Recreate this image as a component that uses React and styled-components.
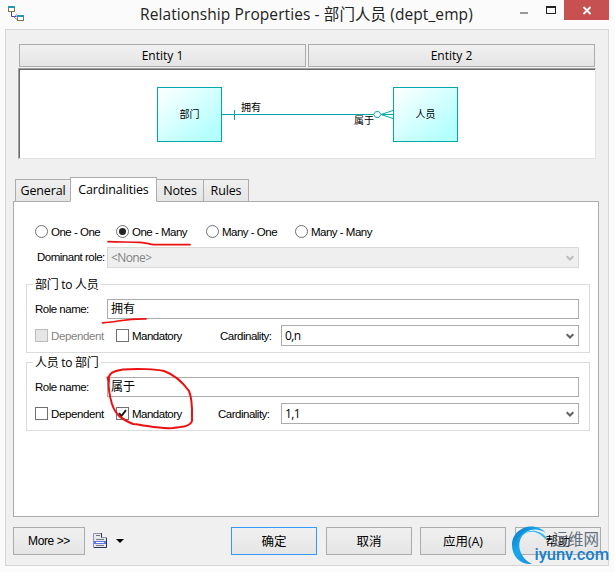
import React from 'react';
import styled, { createGlobalStyle, css } from 'styled-components';

const GlobalStyle = createGlobalStyle`
  *, *::before, *::after { box-sizing: border-box; }
  html, body { margin: 0; padding: 0; overflow: hidden; background: #fbfbfb; }
`;

const uiFont = '"Open Sans", "Noto Sans CJK SC", sans-serif';
const smallFont = '"Liberation Sans", "Noto Sans CJK SC", sans-serif';

const Window = styled.div`
  position: relative;
  width: 615px;
  height: 572px;
  background: #fbfbfb;
  color: #000;
  font-family: ${smallFont};
  font-size: 11.5px;
  line-height: 16px;
  white-space: nowrap;
`;

const TitleBar = styled.header`
  display: flex;
  height: 29px;
  padding-left: 8px;
`;

const AppIcon = styled.svg`
  flex: none;
  margin-top: 6px;
`;

const Title = styled.h1`
  flex: none;
  width: 356px;
  margin: 0 0 0 116px;
  font: 400 15.5px/29px ${uiFont};
  letter-spacing: 0.09px;
  color: #222;
`;

const WindowControls = styled.div`
  display: flex;
  margin-left: auto;
  margin-right: 6px;
`;

const CaptionButton = styled.button`
  display: block;
  flex: none;
  width: ${(p) => p.$width}px;
  height: 20px;
  padding: 0;
  border: 0;
  background: ${(p) => (p.$close ? '#c75050' : 'transparent')};
  svg { display: block; }
`;

const Client = styled.main`
  width: 604px;
  height: 537px;
  margin-left: 5px;
  padding: 14px 9px 0 7px;
  border: 1px solid #d6d6d6;
  background: #f0f0f0;
`;

const EntityHeader = styled.div`
  display: flex;
  gap: 2px;
  margin-left: 6px;
`;

const raised = css`
  flex: none;
  border: 1px solid #acacac;
  background: linear-gradient(#f0f0f0, #e5e5e5);
  color: #000;
  padding: 0;
`;

const EntityButton = styled.button`
  ${raised}
  width: 287px;
  height: 23px;
  font: 12px/21px ${uiFont};
`;

const Canvas = styled.div`
  width: 578px;
  height: 91px;
  margin: 1px 0 0 5px;
  border: 1px solid;
  border-color: #a0a0a0 #e3e3e3 #e3e3e3 #a0a0a0;
  background: #fff;
  box-shadow: inset 1px 1px #696969;
  svg { display: block; margin: -1px; }
`;

const Tabs = styled.div`
  display: flex;
  align-items: flex-end;
  height: 24px;
  margin: 18px 0 0 2px;
`;

const Tab = styled.button`
  ${raised}
  width: ${(p) => p.$width}px;
  height: 23px;
  margin-bottom: -1px;
  margin-left: -1px;
  font: 12.5px/21px ${uiFont};
  letter-spacing: -0.15px;
  &:first-child { margin-left: 0; }
  ${(p) => p.$active && css`
    position: relative;
    height: 25px;
    border-bottom-color: #fff;
    background: #fff;
    line-height: 22px;
  `}
`;

const Panel = styled.section`
  width: 586px;
  height: 316px;
  border: 1px solid #acacac;
  background: #fff;
  padding: 23px 0 0 12px;
`;

const RadioRow = styled.div`
  display: grid;
  grid-template-columns: 81px 90px 89px 90px;
  height: 13px;
  margin-left: 9px;
`;

const Choice = styled.label`
  display: flex;
  align-items: center;
  gap: 3px;
  height: 13px;
  letter-spacing: ${(p) => p.$spacing || '-0.5px'};
  color: ${(p) => (p.$disabled ? '#838383' : '#000')};
`;

const Radio = styled.span`
  flex: none;
  display: grid;
  place-items: center;
  width: 13px;
  height: 13px;
  border: 1px solid #707070;
  border-radius: 50%;
  &::after {
    content: '';
    width: 7px;
    height: 7px;
    border-radius: 50%;
    background: ${(p) => (p.$checked ? '#222' : 'transparent')};
  }
`;

const CheckBox = styled.span`
  flex: none;
  width: 13px;
  height: 13px;
  border: 1px solid ${(p) => (p.$disabled ? '#bcbcbc' : '#707070')};
  background: ${(p) => (p.$disabled ? '#e6e6e6' : '#fff')};
  svg { display: block; }
`;

const DominantRow = styled.div`
  display: flex;
  height: 21px;
  margin: 9px 0 0 11px;
`;

const Caption = styled.span`
  flex: none;
  width: ${(p) => p.$width}px;
  line-height: 20px;
  letter-spacing: -0.5px;
`;

const Field = styled.div`
  width: 472px;
  height: 20px;
  padding-left: 3px;
  border: 1px solid #acacac;
  background: #fff;
  font: 12px/18px ${smallFont};
`;

const Select = styled.div`
  display: flex;
  justify-content: space-between;
  width: ${(p) => p.$width}px;
  height: 21px;
  padding: 0 4px 0 3px;
  border: 1px solid ${(p) => (p.$disabled ? '#d9d9d9' : '#acacac')};
  background: ${(p) => (p.$disabled ? '#efefef' : '#fff')};
  color: ${(p) => (p.$disabled ? '#838383' : '#000')};
  font: 12px/19px ${uiFont};
  letter-spacing: -0.6px;
  svg { margin-top: 7px; }
`;

const Group = styled.fieldset`
  width: 564px;
  height: 69px;
  min-width: 0;
  margin: ${(p) => p.$top}px 0 0;
  padding: 0 0 0 8px;
  border: 1px solid #dcdcdc;
  display: block;
`;

const GroupName = styled.span`
  display: table;
  margin-top: -8px;
  margin-left: -2px;
  padding: 0 3px 0 2px;
  background: #fff;
  font: 12px/16px ${uiFont};
  letter-spacing: -0.3px;
`;

const RoleRow = styled.div`
  display: flex;
  height: 20px;
  margin-top: 6px;
`;

const OptionRow = styled.div`
  display: grid;
  grid-template-columns: 81px ${(p) => p.$captionStart}px 1fr 308px;
  height: 21px;
  margin-top: 6px;
  align-items: center;
`;

const Footer = styled.footer`
  display: flex;
  height: 28px;
  margin-top: 10px;
`;

const PushButton = styled.button`
  ${raised}
  width: ${(p) => p.$width || 86}px;
  height: 28px;
  margin-left: ${(p) => p.$left || 0}px;
  border-color: ${(p) => (p.$primary ? '#3399ff' : '#acacac')};
  font: 12.5px/25px ${(p) => (p.$small ? smallFont : uiFont)};
  letter-spacing: ${(p) => (p.$small ? '-0.4px' : '-0.1px')};
  ${(p) => p.$small && 'font-size: 12px;'}
`;

const ListMenu = styled.svg`
  flex: none;
  margin: 6px 0 0 8px;
`;

const Marks = styled.svg`
  position: absolute;
  left: 0;
  top: 0;
  pointer-events: none;
`;

const Chevron = ({ color = '#606060' }) => (
  <svg width="8" height="7" viewBox="0 0 8 7">
    <path d="M.7 1.2 4 4.5 7.3 1.2" fill="none" stroke={color} strokeWidth="2" />
  </svg>
);

const Check = () => (
  <svg width="11" height="11" viewBox="0 0 11 11">
    <path d="M2 5.2 4.4 8 9 2.2" fill="none" stroke="#1a1a1a" strokeWidth="2" />
  </svg>
);

const radios = ['One - One', 'One - Many', 'Many - One', 'Many - Many'];

const roles = [
  { title: '部门 to 人员', name: '拥有', cardinality: '0,n', dependentDisabled: true, mandatory: false, top: 16, captionStart: 104 },
  { title: '人员 to 部门', name: '属于', cardinality: '1,1', dependentDisabled: false, mandatory: true, top: 9, captionStart: 102 },
];

function RoleGroup({ role }) {
  return (
    <Group $top={role.top}>
      <GroupName>{role.title}</GroupName>
      <RoleRow>
        <Caption $width={72}>Role name:</Caption>
        <Field>{role.name}</Field>
      </RoleRow>
      <OptionRow $captionStart={role.captionStart}>
        <Choice $disabled={role.dependentDisabled} $spacing="-0.4px">
          <CheckBox $disabled={role.dependentDisabled} />
          Dependent
        </Choice>
        <Choice>
          <CheckBox>{role.mandatory && <Check />}</CheckBox>
          Mandatory
        </Choice>
        <Caption>Cardinality:</Caption>
        <Select $width={298}>{role.cardinality}<Chevron /></Select>
      </OptionRow>
    </Group>
  );
}

function Diagram() {
  return (
    <svg width="578" height="91" viewBox="18 68 578 91" fontFamily={smallFont} fontSize="10">
      <defs>
        <linearGradient id="entity" x1="0" y1="0" x2="1" y2="1">
          <stop offset="0" stopColor="#fff" />
          <stop offset="0.85" stopColor="#b4ffff" />
        </linearGradient>
      </defs>
      <g stroke="#00a8a8" fill="none">
        <rect x="157.5" y="87.5" width="64" height="54" fill="url(#entity)" />
        <rect x="393.5" y="87.5" width="64" height="54" fill="url(#entity)" />
        <path d="M222 114.5H373.5M234.5 110v10M381 114.5H393M381 114.5 393 110.5M381 114.5 393 118.5" />
        <path d="M373.5 114.5 375.5 111.7 379 111.7 381 114.5 379 117.3 375.5 117.3Z" fill="#fff" />
      </g>
      <text x="179.5" y="118">部门</text>
      <text x="415.5" y="118">人员</text>
      <text x="241" y="111">拥有</text>
      <text x="354" y="124">属于</text>
    </svg>
  );
}

export default function App() {
  return (
    <Window>
      <GlobalStyle />
      <TitleBar>
        <AppIcon width="16" height="16" viewBox="0 0 16 16">
          <path d="M3.5 6v4.5h5" fill="none" stroke="#4a3f9a" />
          <path d="M6 11 9 8.5M6 11 9 13.5" fill="none" stroke="#6a60b0" strokeWidth=".8" />
          <rect x=".5" y=".5" width="6" height="5" fill="#fff" stroke="#85784c" />
          <rect x="9.5" y="9.5" width="6" height="5" fill="#fff" stroke="#85784c" />
          <path d="M0 0h7v2H0zM9 9h7v2H9z" fill="#2497b5" />
        </AppIcon>
        <Title>Relationship Properties - 部门人员 (dept_emp)</Title>
        <WindowControls>
          <CaptionButton $width={26} aria-label="Minimize">
            <svg width="26" height="20"><path d="M8 12h8v2H8z" fill="#999" /></svg>
          </CaptionButton>
          <CaptionButton $width={26} aria-label="Maximize">
            <svg width="26" height="20"><path d="M8 6h10v8H8zM9 8v5h8V8z" fill="#222" fillRule="evenodd" /></svg>
          </CaptionButton>
          <CaptionButton $width={45} $close aria-label="Close">
            <svg width="45" height="20"><path d="m19.5 7 7 7m0-7-7 7" stroke="#fff" strokeWidth="1.8" /></svg>
          </CaptionButton>
        </WindowControls>
      </TitleBar>
      <Client>
        <EntityHeader>
          <EntityButton>Entity 1</EntityButton>
          <EntityButton>Entity 2</EntityButton>
        </EntityHeader>
        <Canvas><Diagram /></Canvas>
        <Tabs>
          <Tab $width={56}>General</Tab>
          <Tab $width={87} $active>Cardinalities</Tab>
          <Tab $width={48}>Notes</Tab>
          <Tab $width={46}>Rules</Tab>
        </Tabs>
        <Panel>
          <RadioRow>
            {radios.map((name) => (
              <Choice key={name}>
                <Radio $checked={name === 'One - Many'} />
                {name}
              </Choice>
            ))}
          </RadioRow>
          <DominantRow>
            <Caption $width={70}>Dominant role:</Caption>
            <Select $width={472} $disabled>{'<None>'}<Chevron color="#bcbcbc" /></Select>
          </DominantRow>
          {roles.map((role) => <RoleGroup key={role.title} role={role} />)}
        </Panel>
        <Footer>
          <PushButton $width={72} $small>More &gt;&gt;</PushButton>
          <ListMenu width="32" height="16" viewBox="0 0 32 16">
            <path d="M.5.5h8v4h5v10H.5z" fill="#e8e8ec" stroke="#8d93ac" />
            <path d="M8.5 0v4.5M13.5 5v9.5H1" fill="none" stroke="#263350" />
            <path d="M1 8h12v3H1z" fill="#5b78ea" />
            <path d="M3 2.5h4M3 6.5h8M3 12.5h8" stroke="#777" />
            <path d="M3 9.5h8" stroke="#fff" />
            <path d="M23 6h8l-4 4z" />
          </ListMenu>
          <PushButton $left={106} $primary>确定</PushButton>
          <PushButton $left={9}>取消</PushButton>
          <PushButton $left={8}>应用(A)</PushButton>
          <PushButton $left={9}>帮助</PushButton>
        </Footer>
      </Client>
      <Marks width="615" height="572" viewBox="0 0 615 572">
        <defs>
          <linearGradient id="swirl" x1="0" y1="0" x2="1" y2="1">
            <stop offset="0" stopColor="#0872bd" />
            <stop offset=".4" stopColor="#18a9ed" />
            <stop offset="1" stopColor="#1684d0" />
          </linearGradient>
        </defs>
        <g fill="none" stroke="#ed1010" strokeWidth="2" strokeLinecap="round" strokeLinejoin="round">
          <path d="M108 241.7C120 242 132 242 140 242.3C147 242.5 149 244.5 154 244.7L190 244.7" strokeWidth="1.7" />
          <path d="M102.5 322.8C118 322 124 318.5 146 318.8" strokeWidth="1.7" />
          <path d="M107.5 377.5 108.5 381C108 373 113 371 123 369.5C137 368.5 156 369 164 371C175 375 184 384 189 391C193 400 192 415 192 421C190 427 180 427 173 428C159 429 150 426 133 424C122 419 116 416 112 404C109 394 108 386 109 379" />
        </g>
        <path d="M546 533C534 520 512 528 512 545C512 557 521 565 532 564C518 557 515 540 526 532C533 528 540 529 546 533Z" fill="url(#swirl)" />
        <path d="M547 538C538 527 522 529 518 541C524 530 536 528 545 539Z" fill="#36b7ef" />
        <text x="552.5" y="544.5" fontFamily={uiFont} fontSize="15.5" fill="#65707d">运维网</text>
        <text x="534.5" y="560" fontFamily="Roboto, sans-serif" fontSize="16.5" fontWeight="500" fill="#187fce" textLength="74.5">iyunv.com</text>
      </Marks>
    </Window>
  );
}
